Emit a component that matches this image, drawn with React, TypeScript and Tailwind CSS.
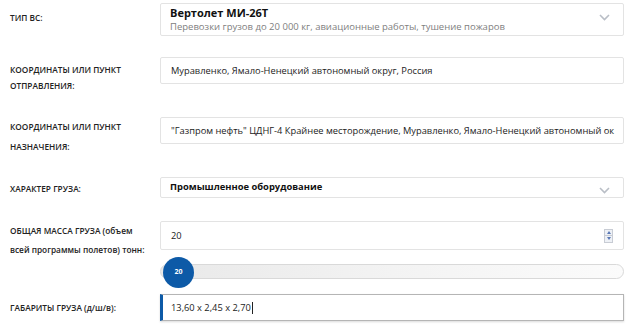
import { ReactNode } from "react";

function Label({ children, className = "" }: { children: ReactNode; className?: string }) {
  return (
    <div className={`w-[160px] shrink-0 pl-[10px] pr-2 text-[8.3px] font-semibold text-[#222] ${className}`}>
      {children}
    </div>
  );
}

function Chevron() {
  return (
    <svg width="11" height="7" viewBox="0 0 11 7" className="shrink-0">
      <path d="M1 1l4.5 4.5L10 1" fill="none" stroke="#b9bec6" strokeWidth="1.6" />
    </svg>
  );
}

function Spinner() {
  return (
    <div className="flex h-[14px] w-[9px] flex-col border border-[#c8ccd4] bg-[#eef1f6]">
      <div className="flex flex-1 items-center justify-center border-b border-[#c8ccd4]">
        <div className="h-0 w-0 border-x-[2.5px] border-b-[3px] border-x-transparent border-b-[#5a78b5]" />
      </div>
      <div className="flex flex-1 items-center justify-center">
        <div className="h-0 w-0 border-x-[2.5px] border-t-[3px] border-x-transparent border-t-[#5a78b5]" />
      </div>
    </div>
  );
}

export default function App() {
  return (
    <div
      className="h-[328px] w-[630px] overflow-hidden bg-white pt-[3px] text-[#222]"
      style={{ fontFamily: '"Open Sans", "Noto Sans", sans-serif' }}
    >
      {/* тип вс */}
      <div className="flex h-[33px] items-start">
        <Label className="pt-[9px] leading-[12px]">ТИП ВС:</Label>
        <div className="flex h-[33px] w-[464px] items-center justify-between rounded-[2px] border border-[#e3e3e3] pl-[9px] pr-[13px]">
          <div className="flex flex-col pb-[1px]">
            <span className="text-[11px] font-bold leading-[15px] text-[#111]">Вертолет МИ-26Т</span>
            <span className="text-[9.5px] leading-[13px] text-[#808080]">
              Перевозки грузов до 20 000 кг, авиационные работы, тушение пожаров
            </span>
          </div>
          <div className="pb-[4px]">
            <Chevron />
          </div>
        </div>
      </div>

      {/* отправление */}
      <div className="mt-[21px] flex h-[27px] items-start">
        <Label className="pt-[5px] leading-[16px]">
          КООРДИНАТЫ ИЛИ ПУНКТ
          <br />
          ОТПРАВЛЕНИЯ:
        </Label>
        <div className="flex h-[27px] w-[464px] items-center rounded-[2px] border border-[#e3e3e3] pl-[10px] text-[9.3px] text-[#222]">
          Муравленко, Ямало-Ненецкий автономный округ, Россия
        </div>
      </div>

      {/* назначение */}
      <div className="mt-[33px] flex h-[27px] items-start">
        <Label className="pt-0 leading-[20px]">
          КООРДИНАТЫ ИЛИ ПУНКТ
          <br />
          НАЗНАЧЕНИЯ:
        </Label>
        <div className="flex h-[27px] w-[464px] items-center overflow-hidden whitespace-nowrap rounded-[2px] border border-[#e3e3e3] pl-[10px] text-[9.3px] text-[#222]">
          "Газпром нефть" ЦДНГ-4 Крайнее месторождение, Муравленко, Ямало-Ненецкий автономный ок
        </div>
      </div>

      {/* характер груза */}
      <div className="mt-[33px] flex h-[21px] items-start">
        <Label className="pt-[6px] leading-[12px]">ХАРАКТЕР ГРУЗА:</Label>
        <div className="flex h-[21px] w-[464px] items-center justify-between rounded-[2px] border border-[#e3e3e3] pl-[9px] pr-[13px]">
          <span className="text-[9.4px] font-bold text-[#111]">Промышленное оборудование</span>
          <div className="pt-[6px]">
            <Chevron />
          </div>
        </div>
      </div>

      {/* масса */}
      <div className="mt-[23px] flex h-[29px] items-start">
        <Label className="pt-0 leading-[19px]">
          ОБЩАЯ МАССА ГРУЗА (объем
          <br />
          всей программы полетов) тонн:
        </Label>
        <div className="flex h-[29px] w-[464px] items-center justify-between rounded-[2px] border border-[#e3e3e3] pl-[10px] pr-[10px] text-[9.3px] text-[#222]">
          <span>20</span>
          <Spinner />
        </div>
      </div>

      {/* слайдер */}
      <div className="mt-[14px] flex h-[15px] items-center">
        <div className="w-[160px] shrink-0" />
        <div className="relative h-[15px] w-[464px] rounded-full border border-[#d9d9d9] bg-gradient-to-r from-[#e9e9e9] via-[#f3f3f3] to-[#fbfbfb]">
          <div className="absolute left-[2px] top-[-8px] flex h-[31px] w-[31px] items-center justify-center rounded-full bg-[#0d5aa7] text-[7px] font-bold text-white">
            20
          </div>
        </div>
      </div>

      {/* габариты */}
      <div className="mt-[15px] flex h-[27px] items-center">
        <Label className="leading-[12px]">ГАБАРИТЫ ГРУЗА (д/ш/в):</Label>
        <div className="flex h-[27px] w-[464px] items-center border border-[#b5b5b5] border-l-[3px] border-l-[#0d5aa7] pl-[8px] text-[9.3px] text-[#222] shadow-[0_1px_2px_rgba(0,0,0,0.15)]">
          <span>13,60 x 2,45 x 2,70</span>
          <span className="ml-[1px] h-[12px] w-px bg-[#222]" />
        </div>
      </div>
    </div>
  );
}
